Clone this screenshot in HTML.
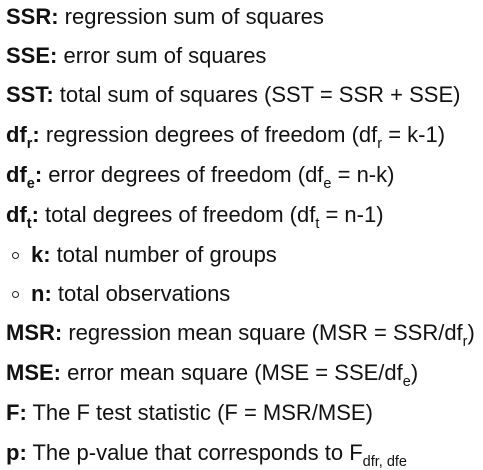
<html><head><style>
body{margin:0;width:483px;height:468px;background:#fff;font-family:"Liberation Sans",Arial,sans-serif;color:#111;position:relative;overflow:hidden}
.l{position:absolute;left:6px;font-size:22px;line-height:22px;white-space:nowrap}
sub{font-size:14.5px;vertical-align:-6px;line-height:0}
.i{left:31px}
.i:before{content:"";position:absolute;left:-19px;top:8px;width:5px;height:5px;border:1.3px solid #222;border-radius:50%}
</style></head><body>
<div class="l" style="top:6px"><b>SSR:</b> regression sum of squares</div>
<div class="l" style="top:45px"><b>SSE:</b> error sum of squares</div>
<div class="l" style="top:84px"><b>SST:</b> total sum of squares (SST = SSR + SSE)</div>
<div class="l" style="top:124px"><b>df<sub>r</sub>:</b> regression degrees of freedom (df<sub>r</sub> = k-1)</div>
<div class="l" style="top:164px"><b>df<sub>e</sub>:</b> error degrees of freedom (df<sub>e</sub> = n-k)</div>
<div class="l" style="top:204px"><b>df<sub>t</sub>:</b> total degrees of freedom (df<sub>t</sub> = n-1)</div>
<div class="l i" style="top:244px"><b>k:</b> total number of groups</div>
<div class="l i" style="top:283px"><b>n:</b> total observations</div>
<div class="l" style="top:322px"><b>MSR:</b> regression mean square (MSR = SSR/df<sub>r</sub>)</div>
<div class="l" style="top:362px"><b>MSE:</b> error mean square (MSE = SSE/df<sub>e</sub>)</div>
<div class="l" style="top:402px"><b>F:</b> The F test statistic (F = MSR/MSE)</div>
<div class="l" style="top:442px"><b>p:</b> The p-value that corresponds to F<sub>dfr, dfe</sub></div>
</body></html>
